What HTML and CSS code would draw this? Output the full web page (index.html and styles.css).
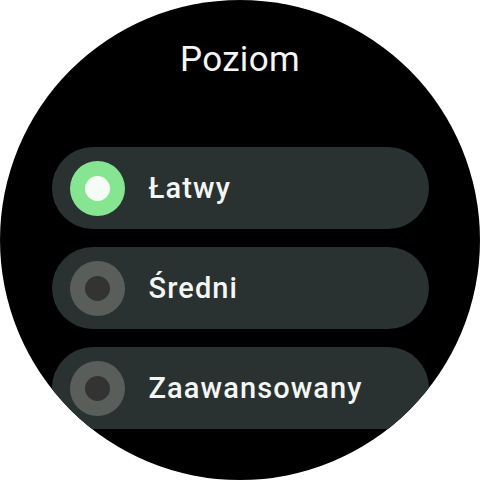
FILE: index.html
```html
<!DOCTYPE html>
<html lang="pl">
<head>
  <meta charset="UTF-8" />
  <title>Poziom</title>
  <link rel="stylesheet" href="styles.css">
</head>
<body>
  <div class="watch">
    <h1 class="title">Poziom</h1>
    <div class="list">
      <div class="chip selected">
        <span class="radio"><span class="dot"></span></span>
        <span class="label">Łatwy</span>
      </div>
      <div class="chip">
        <span class="radio"><span class="dot"></span></span>
        <span class="label">Średni</span>
      </div>
      <div class="chip last">
        <span class="radio"><span class="dot"></span></span>
        <span class="label">Zaawansowany</span>
      </div>
    </div>
  </div>
</body>
</html>
```

FILE: styles.css
```css
body {
  margin: 0;
  background: #fff;
  font-family: Roboto, 'Liberation Sans', sans-serif;
}

.watch {
  width: 480px;
  height: 480px;
  border-radius: 50%;
  background: #000;
  overflow: hidden;
  display: flex;
  flex-direction: column;
  align-items: center;
}

.title {
  margin: 36px 0 0;
  height: 47px;
  font-size: 35px;
  font-weight: 400;
  line-height: 47px;
  letter-spacing: 0.3px;
  color: #f4f6f4;
}

.list {
  margin-top: 64px;
  height: 282px;
  overflow: hidden;
  display: flex;
  flex-direction: column;
  gap: 18px;
}

.chip {
  width: 377px;
  height: 82px;
  flex-shrink: 0;
  box-sizing: border-box;
  padding-left: 18px;
  border-radius: 41px;
  background: #2a3131;
  display: flex;
  align-items: center;
  gap: 24px;
}

.chip.last {
  height: 110px;
  align-items: flex-start;
  padding-top: 14px;
}

.radio {
  width: 55px;
  height: 55px;
  flex-shrink: 0;
  border-radius: 50%;
  background: #5a5e5b;
  display: flex;
  align-items: center;
  justify-content: center;
}

.dot {
  width: 25px;
  height: 25px;
  border-radius: 50%;
  background: #333333;
}

.selected .radio {
  background: #86e590;
}

.selected .dot {
  background: #f5fbf5;
}

.label {
  font-size: 29px;
  font-weight: 500;
  letter-spacing: 1.1px;
  color: #f4f6f4;
}

.chip.last .label {
  line-height: 55px;
}
```
